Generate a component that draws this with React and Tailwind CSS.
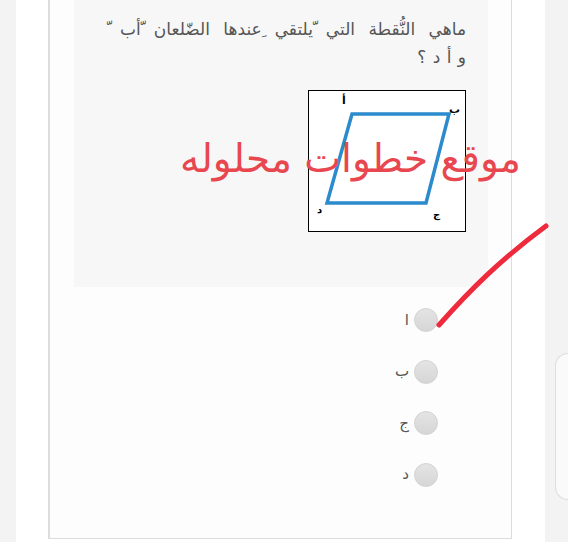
import React from "react";

const options = ["ا", "ب", "ج", "د"];

const Radio = ({ label }) => (
  <div className="flex items-center justify-end gap-[5px] h-[24px]">
    <span className="text-[15px] text-[#555]">{label}</span>
    <span className="h-[24px] w-[24px] rounded-full bg-gradient-to-b from-[#e4e4e4] to-[#d6d6d6] border border-[#d2d2d2]" />
  </div>
);

const Figure = () => (
  <div className="relative h-[142px] w-[158px] border-[1.5px] border-black bg-white">
    <svg width="158" height="142" viewBox="0 0 158 142" className="absolute inset-0">
      <polygon points="45,23 142,23 119,112 20,112" fill="none" stroke="#2b8bcc" strokeWidth="3.5" strokeLinejoin="miter" />
    </svg>
    <span className="absolute left-[33px] top-[2px] text-[11px] font-bold leading-[16px]">أ</span>
    <span className="absolute left-[140px] top-[12px] text-[11px] font-bold leading-[14px]">ب</span>
    <span className="absolute left-[8px] top-[114px] text-[10px] font-bold leading-none">د</span>
    <span className="absolute left-[124px] top-[119px] text-[10px] font-bold leading-none">ج</span>
  </div>
);

export default function App() {
  return (
    <div
      className="relative flex h-[542px] w-[568px] overflow-hidden bg-[#f3f3f3]"
      style={{ fontFamily: '"DejaVu Sans", "Noto Sans", sans-serif' }}
    >
      <div className="w-[16px] shrink-0" />
      <div className="w-[529px] shrink-0 bg-white pl-[32px]">
        <div className="h-[539px] w-[464px] border-l-2 border-r border-b border-[#dcdcdc] bg-[#fdfdfd] pl-[24px] pr-[23px]">
          <div dir="rtl" className="h-[287px] bg-[#f7f7f7] px-[22px] pt-[15px]">
            <p className="text-[17px] leading-[28px] text-[#555]">
              <span className="whitespace-nowrap [word-spacing:8px]">ماهي النُّقطة التي ّيلتقي ِعندها الضّلعان ّأب ّ</span>
              <br />
              <span className="[word-spacing:1px]">و أ د ؟</span>
            </p>
            <div className="mt-[19px]">
              <Figure />
            </div>
          </div>
          <div dir="ltr" className="flex flex-col gap-[27.5px] pr-[50px] pt-[21px]">
            {options.map((o) => (
              <Radio key={o} label={o} />
            ))}
          </div>
        </div>
      </div>
      <div className="flex-1 pl-[10px] pt-[353px]">
        <div className="h-[147px] rounded-l-[14px] border border-r-0 border-[#dedede] bg-[#fafafa]" />
      </div>

      {/* watermark + annotation overlay */}
      <div
        dir="rtl"
        className="pointer-events-none absolute right-[47px] top-[134px] text-[39px] leading-[50px] text-[#e8474f] whitespace-nowrap"
      >
        موقع خطوات محلوله
      </div>
      <svg className="pointer-events-none absolute left-0 top-0" width="568" height="542">
        <path d="M439 325 C470 290 500 260 546 226" fill="none" stroke="#ee2a3c" strokeWidth="5" strokeLinecap="round" />
      </svg>
    </div>
  );
}
